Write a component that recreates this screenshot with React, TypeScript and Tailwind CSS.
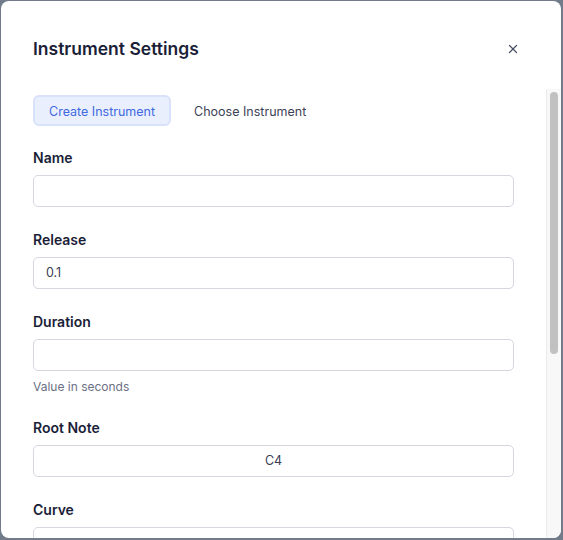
import React from 'react';
import { X } from 'lucide-react';

interface Field {
    label: string;
    value?: string;
    hint?: string;
    centered?: boolean;
}

const fields: Field[] = [
    { label: 'Name' },
    { label: 'Release', value: '0.1' },
    { label: 'Duration', hint: 'Value in seconds' },
    { label: 'Root Note', value: 'C4', centered: true },
    { label: 'Curve', centered: true },
];

const App: React.FC = () => {
    return (
        <div className="w-[563px] h-[540px] bg-[#717b8a] p-px font-['Inter','Noto_Sans',sans-serif]">
            <div className="w-[560px] h-[537px] bg-white rounded-lg flex flex-col overflow-hidden">
                <div className="flex items-center justify-between px-8 pt-9 pb-7">
                    <h2 className="text-[17.5px] leading-6 font-semibold text-[#1b1e38]">Instrument Settings</h2>
                    <button className="w-8 h-6 flex items-center justify-center text-[#4b5064]">
                        <X className="w-3.5 h-3.5" strokeWidth={2.2} />
                    </button>
                </div>
                <div className="flex-1 flex min-h-0">
                    {/* scroll content (scrollbar drawn beside it) */}
                    <div className="flex-1 overflow-hidden px-8 pt-1.5">
                        <div className="flex items-center gap-[7px] mb-[22px]">
                            <button className="h-[31px] px-[14px] rounded-md bg-[#eaeffd] border-2 border-[#d9e2fb] text-[12.5px] leading-none pt-[3px] text-[#4169e1]">
                                Create Instrument
                            </button>
                            <button className="h-[31px] px-[14px] rounded-md border-2 border-transparent text-[12.5px] leading-none pt-[3px] text-[#3d4257]">
                                Choose Instrument
                            </button>
                        </div>
                        <div className="flex flex-col gap-[23px]">
                            {fields.map((f) => (
                                <div key={f.label} className="flex flex-col">
                                    <label className="text-sm leading-5 font-semibold text-[#1b1e38] mb-[7px]">{f.label}</label>
                                    <div className={`h-8 rounded-[5px] border border-[#d6d6e2] flex items-center px-3 text-[12.5px] text-[#3c4052] ${f.centered ? 'justify-center' : ''}`}>
                                        {f.value}
                                    </div>
                                    {f.hint && (
                                        <span className="mt-2 text-xs leading-4 text-[#6b7085]">{f.hint}</span>
                                    )}
                                </div>
                            ))}
                        </div>
                    </div>
                    <div className="w-[15px] shrink-0 bg-[#f8f8f8] border-l border-[#ebebeb] pt-[3px] pl-[3px]">
                        <div className="w-2 h-[262px] rounded-full bg-[#c1c1c1]" />
                    </div>
                </div>
            </div>
        </div>
    );
};

export default App;
